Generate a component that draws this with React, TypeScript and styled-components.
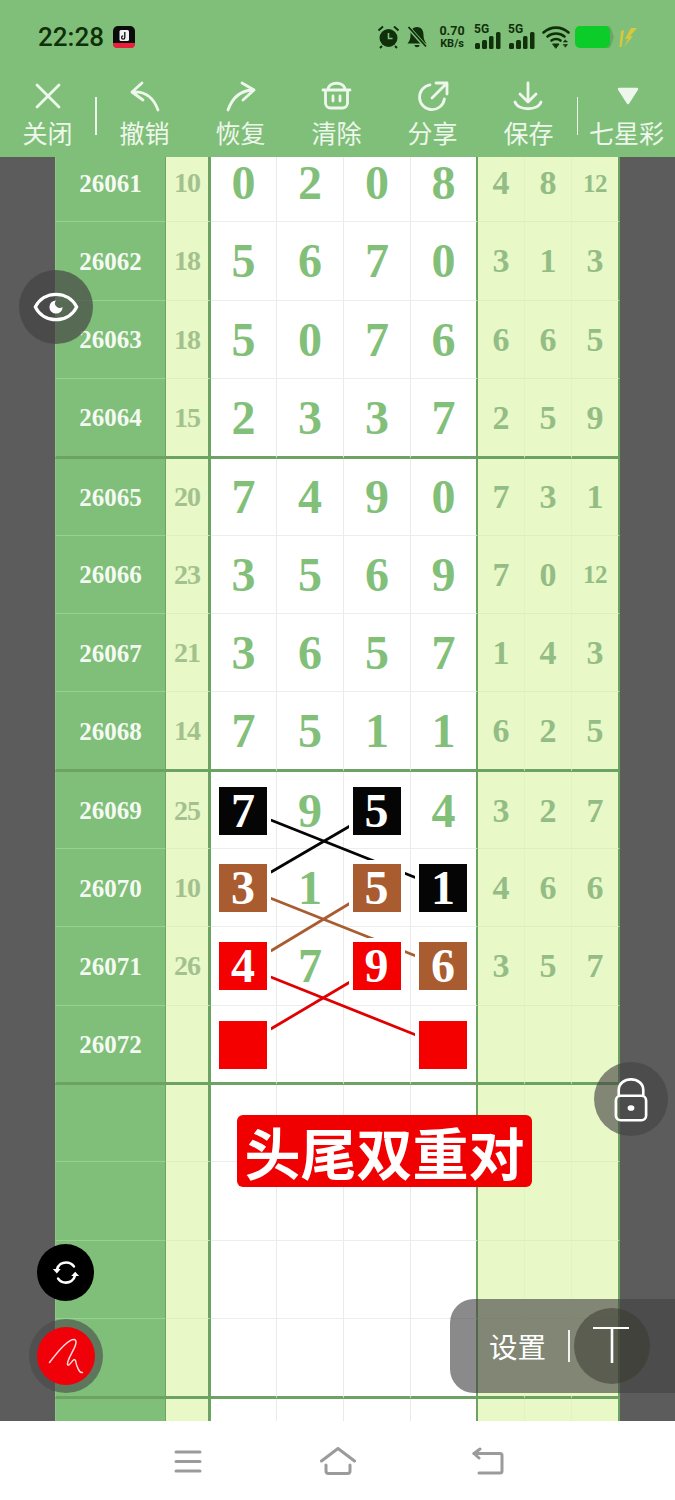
import React from "react";
import styled, { createGlobalStyle, css } from "styled-components";

const GREEN = "#80bf79";
const DARK_LINE = "#6ca262";
const LIGHT = "#e8f8c6";

const Global = createGlobalStyle`
  html, body { margin: 0; padding: 0; background: #fff; }
  * { box-sizing: border-box; }
`;

const Page = styled.div`
  position: relative;
  width: 675px;
  height: 1500px;
  display: flex;
  flex-direction: column;
  overflow: hidden;
  font-family: "Noto Sans CJK SC", "Noto Sans", sans-serif;
`;

const Header = styled.header`
  background: ${GREEN};
  flex: none;
  position: relative;
  z-index: 3;
`;

const StatusBar = styled.div`
  height: 72px;
  display: flex;
  align-items: center;
  padding: 2px 0 0 38px;
  color: #10300c;
`;

const Time = styled.span`
  font: 500 26px/1 Roboto, sans-serif;
  width: 75px;
`;

const StatusRight = styled.div`
  margin-left: auto;
  display: flex;
  align-items: center;
  padding-right: 37px;
`;

const Speed = styled.div`
  width: 30px;
  margin: 0 7px 0 9px;
  display: flex;
  flex-direction: column;
  align-items: center;
  font-family: Roboto, sans-serif;
  font-weight: 700;
  color: #10300c;
  span { display: block; height: 13.5px; line-height: 13.5px; }
  span:first-child { font-size: 12.5px; }
  span:last-child { font-size: 11px; }
`;

const Signal = styled.div`
  position: relative;
  width: 27px;
  height: 26px;
  margin-right: 7px;
  span {
    position: absolute;
    left: 0;
    top: -1px;
    font: 700 12px/12px Roboto, sans-serif;
    color: #10300c;
  }
  svg { position: absolute; left: 0; top: 0; }
`;

const Toolbar = styled.nav`
  height: 85px;
  display: flex;
  align-items: flex-start;
`;

const ToolItem = styled.div<{ $w: number }>`
  width: ${(p) => p.$w}px;
  flex: none;
  padding-top: 8px;
  display: flex;
  flex-direction: column;
  align-items: center;
  color: #eef7ec;
`;

const ToolLabel = styled.span`
  margin-top: 6px;
  font-size: 25px;
  line-height: 28px;
  white-space: nowrap;
`;

const ToolSep = styled.i`
  flex: none;
  width: 1.5px;
  height: 38px;
  margin-top: 25px;
  background: #eef7ec;
`;

const Body = styled.main`
  flex: 1;
  min-height: 0;
  background: #5c5c5c;
  overflow: hidden;
`;

const Sheet = styled.section`
  position: relative;
  width: 565px;
  margin: -13px 0 0 55px;
`;

const Row = styled.div<{ $h: number }>`
  display: grid;
  grid-template-columns: 111px 45px 66px 67px 67px 67px 47px 47px 48px;
  height: ${(p) => p.$h}px;
`;

type CellProps = { $thick: boolean };

const line = (thin: string) => css<CellProps>`
  border-bottom: ${(p) => (p.$thick ? `3px solid ${DARK_LINE}` : `1px solid ${thin}`)};
`;

const center = css`
  display: flex;
  align-items: center;
  justify-content: center;
  padding-top: 1px;
  font-family: "Liberation Serif", serif;
  font-weight: 700;
  line-height: 1;
`;

const IssueCell = styled.div<CellProps>`
  ${center}
  ${line("#97d08f")}
  background: ${GREEN};
  color: #f4faf2;
  font-size: 25px;
  border-left: 1px solid #8cc584;
  border-right: 1px solid ${DARK_LINE};
`;

const SumCell = styled.div<CellProps>`
  ${center}
  ${line("#deefbc")}
  background: ${LIGHT};
  color: #a3c18e;
  font-size: 28px;
  letter-spacing: -1px;
  border-right: 3px solid ${DARK_LINE};
`;

const DigitCell = styled.div<CellProps & { $end: boolean }>`
  ${center}
  ${line("#ebeeeb")}
  background: #fff;
  color: #82c07a;
  font-size: 48px;
  border-right: ${(p) => (p.$end ? `2px solid ${DARK_LINE}` : "1px solid #e9ebe9")};
`;

const Mark = styled.span<{ $c: string }>`
  position: relative;
  z-index: 2;
  width: 48px;
  height: 48px;
  margin-right: 1px;
  display: flex;
  align-items: center;
  justify-content: center;
  background: ${(p) => p.$c};
  color: #fff;
  box-shadow: 0 0 0 4px #fff;
`;

const SideCell = styled.div<CellProps & { $end: boolean; $small: boolean }>`
  ${center}
  ${line("#deefbc")}
  background: ${LIGHT};
  color: #94bd86;
  font-size: ${(p) => (p.$small ? 25 : 34)}px;
  letter-spacing: ${(p) => (p.$small ? "-0.5px" : 0)};
  border-right: ${(p) => (p.$end ? `2px solid ${DARK_LINE}` : "1px solid #e1f3bf")};
`;

const Wires = styled.svg`
  position: absolute;
  left: 0;
  top: 0;
  z-index: 1;
  pointer-events: none;
`;

const Banner = styled.div`
  position: absolute;
  left: 237px;
  top: 1115px;
  width: 295px;
  height: 72px;
  z-index: 2;
  background: #f00000;
  border-radius: 6px;
  color: #fff;
  display: flex;
  align-items: center;
  justify-content: center;
  font-size: 56px;
  font-weight: 700;
  line-height: 1;
  white-space: nowrap;
`;

const Float = styled.div<{ $x: number; $y: number; $r: number; $bg: string }>`
  position: absolute;
  z-index: 4;
  left: ${(p) => p.$x - p.$r}px;
  top: ${(p) => p.$y - p.$r}px;
  width: ${(p) => p.$r * 2}px;
  height: ${(p) => p.$r * 2}px;
  border-radius: 50%;
  background: ${(p) => p.$bg};
  display: flex;
  align-items: center;
  justify-content: center;
`;

const PenButton = styled(Float)`
  box-shadow: 0 0 0 8px rgba(72, 72, 72, 0.62);
`;

const SettingsPill = styled.div`
  position: absolute;
  z-index: 4;
  left: 450px;
  top: 1299px;
  width: 225px;
  height: 94px;
  border-radius: 24px 0 0 24px;
  background: rgba(66, 66, 66, 0.62);
  display: flex;
  align-items: center;
  padding-left: 39px;
  color: #fff;
`;

const PillLabel = styled.span`
  font-size: 28.5px;
  line-height: 1;
  width: 57px;
  white-space: nowrap;
`;

const PillSep = styled.i`
  width: 2px;
  height: 32px;
  margin-left: 22px;
  background: #f2f2f2;
`;

const PillCircle = styled.div`
  width: 76px;
  height: 76px;
  margin-left: 4px;
  border-radius: 50%;
  background: rgba(58, 58, 50, 0.55);
  display: flex;
  align-items: center;
  justify-content: center;
`;

const BottomNav = styled.footer`
  flex: none;
  height: 79px;
  background: #fff;
  display: flex;
  justify-content: center;
  align-items: center;
  position: relative;
  z-index: 3;
`;

const NavSlot = styled.div`
  width: 150px;
  display: flex;
  justify-content: center;
  color: #9b9b9b;
`;

type Mk = [string, string];
const K = "#050505", B = "#a95c30", R = "#f40000";
type RowData = { id: string; sum: string; d: (string | Mk)[]; s: string[] };
const rows: RowData[] = [
  { id: "26061", sum: "10", d: ["0", "2", "0", "8"], s: ["4", "8", "12"] },
  { id: "26062", sum: "18", d: ["5", "6", "7", "0"], s: ["3", "1", "3"] },
  { id: "26063", sum: "18", d: ["5", "0", "7", "6"], s: ["6", "6", "5"] },
  { id: "26064", sum: "15", d: ["2", "3", "3", "7"], s: ["2", "5", "9"] },
  { id: "26065", sum: "20", d: ["7", "4", "9", "0"], s: ["7", "3", "1"] },
  { id: "26066", sum: "23", d: ["3", "5", "6", "9"], s: ["7", "0", "12"] },
  { id: "26067", sum: "21", d: ["3", "6", "5", "7"], s: ["1", "4", "3"] },
  { id: "26068", sum: "14", d: ["7", "5", "1", "1"], s: ["6", "2", "5"] },
  { id: "26069", sum: "25", d: [["7", K], "9", ["5", K], "4"], s: ["3", "2", "7"] },
  { id: "26070", sum: "10", d: [["3", B], "1", ["5", B], ["1", K]], s: ["4", "6", "6"] },
  { id: "26071", sum: "26", d: [["4", R], "7", ["9", R], ["6", B]], s: ["3", "5", "7"] },
  { id: "26072", sum: "", d: [["", R], "", "", ["", R]], s: ["", "", ""] },
  ...Array.from({ length: 5 }, () => ({ id: "", sum: "", d: ["", "", "", ""], s: ["", "", ""] })),
];

const wires: [number, number, number, number, string][] = [
  [270.7, 820, 416, 877.7, "#050505"],
  [350, 826, 270.7, 872.3, "#050505"],
  [270.7, 898.3, 416, 956, "#a95c30"],
  [350, 903.3, 270.7, 951, "#a95c30"],
  [270.7, 977, 416, 1035, "#e00000"],
  [350, 982, 270.7, 1029, "#e00000"],
];

const stroke = { fill: "none", stroke: "currentColor", strokeLinecap: "round", strokeLinejoin: "round" } as const;

const ToolIcon = ({ children }: { children: React.ReactNode }) => (
  <svg width="32" height="32" viewBox="0 0 32 32" {...stroke} strokeWidth={2.8}>
    {children}
  </svg>
);

const tools: { w: number; label: string; icon: React.ReactNode }[] = [
  { w: 95, label: "关闭", icon: <path d="M5 5 L27 27 M27 5 L5 27" /> },
  { w: 96, label: "撤销", icon: <path d="M13 3 L3 12 L14 20 M3 12 C14 11 24 16 29 30" /> },
  { w: 96, label: "恢复", icon: <path d="M17 3 L29 10 L18 20 M29 10 C17 10 8 16 3 30" /> },
  { w: 96, label: "清除", icon: <path d="M4.5 11 V23 a5 5 0 0 0 5 5 H21.5 a5 5 0 0 0 5-5 V11 M2 10 H29 M7 10 C7 1 24 1 24 10 M12 16 V21 M19 16 V21" /> },
  { w: 96, label: "分享", icon: <path d="M13 4.8 A12.5 12.5 0 1 0 27.4 19 M19 3 H30 V14 M30 3 L15 18" /> },
  { w: 96, label: "保存", icon: <path d="M15 3 V22 M7 14 L15 22 L23 14 M2 22 C5 31 25 31 28 22" /> },
];

const SignalIcon = () => (
  <Signal>
    <span>5G</span>
    <svg width="27" height="26" viewBox="0 0 27 26" fill="#10300c">
      <rect x="1" y="19" width="5" height="6" rx="1.5" />
      <rect x="8" y="16" width="5" height="9" rx="1.5" />
      <rect x="15" y="12" width="4.5" height="13" rx="1.5" />
      <rect x="22" y="8" width="4.5" height="17" rx="1.5" />
    </svg>
  </Signal>
);

export default function App() {
  return (
    <Page>
      <Global />
      <Header>
        <StatusBar>
          <Time>22:28</Time>
          <svg width="22" height="22" viewBox="0 0 22 22">
            <rect x="0" y="0" width="22" height="22" rx="5" fill="#0b0b0b" />
            <path d="M0 17 H22 V18 a4 4 0 0 1-4 4 H4 a4 4 0 0 1-4-4 Z" fill="#e8203c" />
            <rect x="6.5" y="4" width="9.5" height="11" rx="1.5" fill="#f2f2f2" />
            <path d="M11.8 6 V11.5 a1.6 1.6 0 1 1-1.6-1.6" fill="none" stroke="#111" strokeWidth="1.3" />
          </svg>
          <StatusRight>
            <svg width="23" height="24" viewBox="0 0 23 24" style={{ marginRight: 6 }}>
              <circle cx="11.5" cy="13" r="9" fill="#10300c" />
              <path d="M11.5 8 V13.5 H15.5" fill="none" stroke="#80bf79" strokeWidth="1.6" />
              <path d="M1.5 5.5 L6 1.5 M21.5 5.5 L17 1.5 M5 21 L3 23 M18 21 L20 23" stroke="#10300c" strokeWidth="2" fill="none" />
            </svg>
            <svg width="22" height="24" viewBox="0 0 22 24">
              <path d="M11 2 C6 2 4.5 6 4.5 10 C4.5 14 3.5 16 1.5 18.5 H20.5 C18.5 16 17.5 14 17.5 10 C17.5 6 16 2 11 2 Z M8.5 20 H13.5 C13.5 23 8.5 23 8.5 20 Z" fill="#10300c" />
              <path d="M2 2 L20 22" stroke="#80bf79" strokeWidth="4" />
              <path d="M2.5 2 L20 21.5" stroke="#10300c" strokeWidth="1.8" />
            </svg>
            <Speed>
              <span>0.70</span>
              <span>KB/s</span>
            </Speed>
            <SignalIcon />
            <SignalIcon />
            <svg width="28" height="24" viewBox="0 0 28 24" style={{ marginRight: 5 }} fill="none" stroke="#10300c" strokeWidth="2.6" strokeLinecap="round">
              <path d="M1.5 7.5 C9 1 19 1 26.5 7.5" />
              <path d="M5.5 11.5 C10.5 7.5 17.5 7.5 22.5 11.5" />
              <path d="M9.5 15.5 C12 13.5 16 13.5 18.5 15.5" />
              <path d="M11 19 H17 L14 23 Z" fill="#10300c" strokeWidth="1" />
              <path d="M23.5 15 L25.5 17 H21.5 Z M21.5 19.5 H25.5 L23.5 22 Z" fill="#10300c" strokeWidth="0.6" />
            </svg>
            <svg width="39" height="24" viewBox="0 0 39 24" style={{ marginRight: 4 }}>
              <path d="M30 1 H33 C35 1 36 3 37 6 L39 12 L37 18 C36 21 35 23 33 23 H30 Z" fill="#6ea56a" />
              <rect x="0" y="1" width="35" height="22" rx="5" fill="#0ccc2a" />
            </svg>
            <svg width="20" height="24" viewBox="0 0 20 24">
              <path d="M3 6 L1.5 22 L3.5 22 L6 5 Z" fill="#d9c93a" />
              <path d="M13 3 L7 14 L10.5 13.5 L6 22 L15 11 L11.5 11.5 L19 3 Z" fill="#d9c93a" />
            </svg>
          </StatusRight>
        </StatusBar>
        <Toolbar>
          {tools.slice(0, 1).map((t) => (
            <ToolItem key={t.label} $w={t.w}>
              <ToolIcon>{t.icon}</ToolIcon>
              <ToolLabel>{t.label}</ToolLabel>
            </ToolItem>
          ))}
          <ToolSep />
          {tools.slice(1).map((t) => (
            <ToolItem key={t.label} $w={t.w}>
              <ToolIcon>{t.icon}</ToolIcon>
              <ToolLabel>{t.label}</ToolLabel>
            </ToolItem>
          ))}
          <ToolSep />
          <ToolItem $w={97}>
            <ToolIcon>
              <path d="M8 9 H26 L17 23 Z" fill="currentColor" strokeWidth={2.4} />
            </ToolIcon>
            <ToolLabel>七星彩</ToolLabel>
          </ToolItem>
        </Toolbar>
      </Header>

      <Body>
        <Sheet>
          <Wires width="565" height="1332" viewBox="55 144 565 1332" fill="none">
            {wires.map(([a, b, c, d, col], i) => (
              <line key={i} x1={a} y1={b} x2={c} y2={d} stroke={col} strokeWidth={2.8} />
            ))}
          </Wires>
          {rows.map((r, i) => {
            const thick = i % 4 === 3;
            const h = thick ? 79.83 : i % 4 === 0 && i > 0 ? 76.83 : 78.33;
            return (
              <Row key={i} $h={h}>
                <IssueCell $thick={thick}>{r.id}</IssueCell>
                <SumCell $thick={thick}>{r.sum}</SumCell>
                {r.d.map((v, j) => (
                  <DigitCell key={j} $thick={thick} $end={j === 3}>
                    {Array.isArray(v) ? <Mark $c={v[1]}>{v[0]}</Mark> : v}
                  </DigitCell>
                ))}
                {r.s.map((v, j) => (
                  <SideCell key={j} $thick={thick} $end={j === 2} $small={v.length > 1}>
                    {v}
                  </SideCell>
                ))}
              </Row>
            );
          })}
        </Sheet>
      </Body>

      <BottomNav>
        <NavSlot>
          <svg width="28" height="24" viewBox="0 0 28 24" fill="none" stroke="currentColor" strokeWidth="3" strokeLinecap="round">
            <path d="M2 3 H26 M2 12.5 H26 M2 22 H26" />
          </svg>
        </NavSlot>
        <NavSlot>
          <svg width="36" height="28" viewBox="0 0 36 28" fill="none" stroke="currentColor" strokeWidth="3" strokeLinecap="round" strokeLinejoin="round">
            <path d="M1.5 14 L18 1.5 L34.5 14" />
            <path d="M6 18 V24 a2.5 2.5 0 0 0 2.5 2.5 H27.5 a2.5 2.5 0 0 0 2.5-2.5 V18" />
          </svg>
        </NavSlot>
        <NavSlot>
          <svg width="32" height="28" viewBox="0 0 32 28" fill="none" stroke="currentColor" strokeWidth="3" strokeLinecap="round" strokeLinejoin="round">
            <path d="M2 6.5 H28 a2 2 0 0 1 2 2 V24 a2 2 0 0 1-2 2 H7" />
            <path d="M8 2 L2 6.5 L7 11" />
          </svg>
        </NavSlot>
      </BottomNav>

      <Banner>头尾双重对</Banner>

      <Float $x={56} $y={307} $r={37} $bg="rgba(66,66,66,0.68)">
        <svg width="46" height="32" viewBox="0 0 48 34" fill="none" stroke="#fff" strokeWidth="3.4">
          <path d="M2 17 C11 -1 37 -1 46 17 C37 35 11 35 2 17 Z" strokeLinejoin="round" />
          <path d="M24 10 a7 7 0 1 0 7 7 a5 5 0 0 1 -7 -7 Z" fill="#fff" stroke="none" />
        </svg>
      </Float>
      <Float $x={631} $y={1099} $r={37} $bg="rgba(66,66,66,0.62)">
        <svg width="34" height="47" viewBox="0 0 36 48" fill="none" stroke="#fff" strokeWidth="2.8">
          <path d="M5 20 V14 C5 -1 31 -1 31 14 V20" />
          <rect x="2" y="20" width="32" height="26" rx="5" />
          <ellipse cx="18" cy="33" rx="3.6" ry="3" fill="#fff" stroke="none" />
        </svg>
      </Float>
      <Float $x={65.5} $y={1272} $r={28.5} $bg="#000">
        <svg width="28" height="25" viewBox="0 0 32 28" fill="none" stroke="#fff" strokeWidth="3" strokeLinecap="round">
          <path d="M5.5 11 C7 5 12 2.5 16 2.5 C20 2.5 23 4 25 7" />
          <path d="M26.5 17 C25 23 20 25.5 16 25.5 C12 25.5 9 24 7 21" />
          <path d="M1 10 H10 L5.5 15 Z" fill="#fff" stroke="none" />
          <path d="M22 18 H31 L26.5 13 Z" fill="#fff" stroke="none" />
        </svg>
      </Float>
      <PenButton $x={65.5} $y={1355.5} $r={29} $bg="#f00008">
        <svg width="58" height="58" viewBox="36.5 1326.5 58 58" fill="none" stroke="#ffd9d9" strokeWidth="1.5" strokeLinecap="round" strokeLinejoin="round">
          <path d="M49 1362 C58 1350 68 1338 74 1339 C80 1342 66 1358 67 1364 C69 1367 73 1356 75 1360 C76 1366 79 1373 82 1372" />
        </svg>
      </PenButton>
      <SettingsPill>
        <PillLabel>设置</PillLabel>
        <PillSep />
        <PillCircle>
          <svg width="38" height="38" viewBox="0 0 38 38" fill="none" stroke="#fff" strokeWidth="2">
            <path d="M0 1 H36" />
            <path d="M19 1 V36" strokeWidth="2.6" />
          </svg>
        </PillCircle>
      </SettingsPill>
    </Page>
  );
}
